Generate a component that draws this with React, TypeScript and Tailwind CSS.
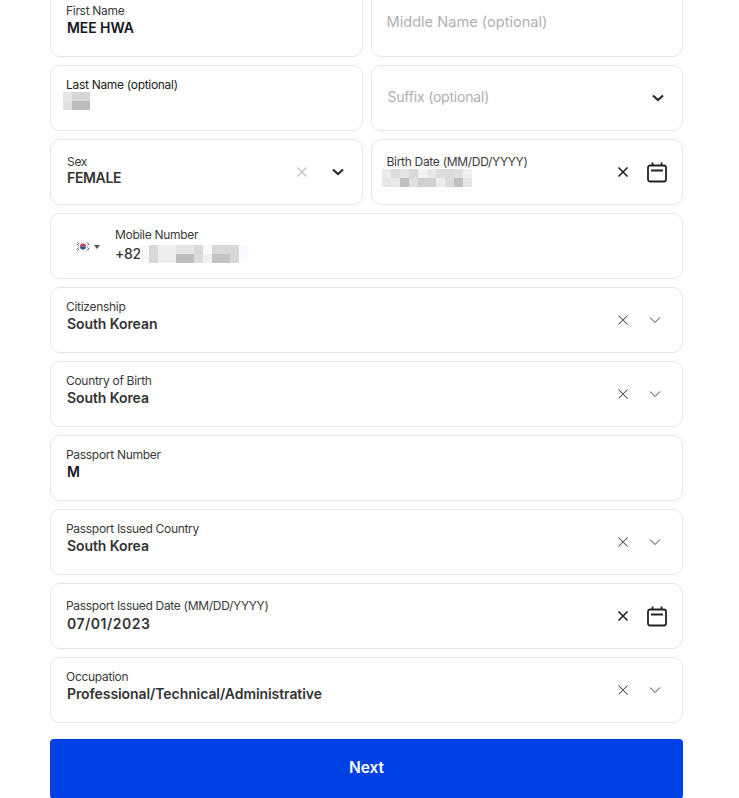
import React from "react";

const XIcon = ({ color = "#444", w = 1.05 }: { color?: string; w?: number }) => (
  <svg width="12" height="12" viewBox="0 0 12 12" fill="none" stroke={color} strokeWidth={w}>
    <path d="M1.5 1.5 10.5 10.5M10.5 1.5 1.5 10.5" />
  </svg>
);
const ThinChevron = () => (
  <svg width="12" height="8" viewBox="0 0 12 8" fill="none" stroke="#444" strokeWidth="1">
    <path d="M1 1.5 6 6.5 11 1.5" />
  </svg>
);
const BoldChevron = () => (
  <svg width="12" height="8" viewBox="0 0 12 8" fill="none" stroke="#2b2b2b" strokeWidth="2.2">
    <path d="M1 1.5 6 6 11 1.5" />
  </svg>
);
const Calendar = () => (
  <svg width="20" height="21" viewBox="0 0 20 21" fill="none" stroke="#222" strokeWidth="1.8">
    <rect x="1" y="3.5" width="18" height="16" rx="2" />
    <path d="M5.5 0.5V3.5M14.5 0.5V3.5M4 8.5H16" />
  </svg>
);
const Flag = () => (
  <svg width="14" height="11" viewBox="0 0 14 11">
    <rect width="14" height="11" fill="#f3f3f3" />
    <path d="M4 5.5a3 3 0 0 1 6 0z" fill="#d8374c" />
    <path d="M4 5.5a3 3 0 0 0 6 0z" fill="#2d4f9e" />
    <path d="M1.5 1.5 3 3M1 3 2.5 4.5M11 1.5 12.5 3M11.5 4.5 13 3M1.5 9.5 3 8M1 8 2.5 6.5M11 9.5 12.5 8M11.5 6.5 13 8" stroke="#444" strokeWidth="0.8" />
  </svg>
);
const Mosaic = ({ rows, cell = 9 }: { rows: string[][]; cell?: number }) => (
  <svg width={rows[0].length * cell} height={rows.length * cell} shapeRendering="crispEdges" className="block">
    {rows.map((r, y) =>
      r.map((c, x) => <rect key={x + "-" + y} x={x * cell} y={y * cell} width={cell} height={cell} fill={c} />)
    )}
  </svg>
);

const Label = ({ children, cls = "" }: { children: React.ReactNode; cls?: string }) => (
  <div className={"text-[12px] leading-[14px] tracking-[-0.3px] text-[#3a3a3a] " + cls}>{children}</div>
);
const Value = ({ children, cls = "" }: { children: React.ReactNode; cls?: string }) => (
  <div className={"text-[14px] leading-[18px] font-semibold tracking-[-0.08px] text-[#333] " + cls}>{children}</div>
);
const Card = ({ children, cls = "" }: { children: React.ReactNode; cls?: string }) => (
  <div className={"h-[66px] rounded-[10px] border border-[#e6e6e6] bg-white flex items-center " + cls}>{children}</div>
);
const Select = ({ label, value }: { label: string; value: string }) => (
  <Card cls="pl-[15px] pr-[21px]">
    <div className="flex-1 pb-[8px]">
      <Label>{label}</Label>
      <Value cls="mt-[1px] pl-[1px]">{value}</Value>
    </div>
    <div className="mr-[20px] flex"><XIcon /></div>
    <ThinChevron />
  </Card>
);

const ln = [
  ["#e4e4e4", "#d6d6d6", "#d6d6d6"],
  ["#e0e0e0", "#bcbcbc", "#bcbcbc"],
];
const bd = [
  ["#ececec", "#dcdcdc", "#e6e6e6", "#d8d8d8", "#f2f2f2", "#e8e8e8", "#dcdcdc", "#dcdcdc", "#dedede", "#f0f0f0"],
  ["#e6e6e6", "#e8e8e8", "#c0c0c0", "#e0e0e0", "#cfcfcf", "#d0d0d0", "#ededed", "#dcdcdc", "#c0c0c0", "#e6e6e6"],
];
const ph = [
  ["#f8f8f8", "#d8d8d8", "#eeeeee", "#eeeeee", "#e4e4e4", "#e4e4e4", "#d8d8d8", "#fafafa", "#d8d8d8", "#d8d8d8", "#d8d8d8", "#f8faff"],
  ["#f8f8f8", "#d8d8d8", "#eeeeee", "#eeeeee", "#bebebe", "#bebebe", "#dcdcdc", "#f0f0f0", "#c4c4c4", "#c4c4c4", "#d8d8d8", "#f8faff"],
];

export default function App() {
  return (
    <div className="h-[798px] overflow-hidden bg-white font-['Inter',sans-serif]">
      <div className="mt-[-9px] ml-[50px] w-[633px] flex flex-col gap-[8px]">
        <div className="grid grid-cols-2 gap-[8px]">
          <Card cls="pl-[15px]">
            <div className="pb-[8px]">
              <Label>First Name</Label>
              <Value cls="mt-[1px] pl-[1px] tracking-[-0.5px] text-[#14141e]">MEE HWA</Value>
            </div>
          </Card>
          <Card cls="pl-[15px]">
            <div className="pb-[5px] text-[14.6px] leading-[20px] text-[#b0b0b0]">Middle Name (optional)</div>
          </Card>
        </div>
        <div className="grid grid-cols-2 gap-[8px]">
          <Card cls="pl-[12px]">
            <div className="pb-[8px]">
              <Label cls="pl-[3px] text-[#222]">Last Name (optional)</Label>
              <Mosaic rows={ln} />
            </div>
          </Card>
          <Card cls="pl-[16px] pr-[18px] justify-between">
            <div className="pb-[3px] text-[14px] tracking-[-0.2px] text-[#b0b0b0]">Suffix (optional)</div>
            <BoldChevron />
          </Card>
        </div>
        <div className="grid grid-cols-2 gap-[8px]">
          <Card cls="pl-[16px] pr-[18px]">
            <div className="flex-1 pb-[2px]">
              <Label>Sex</Label>
              <Value cls="text-[13.5px] tracking-[-0.35px] text-[#2a2a35]">FEMALE</Value>
            </div>
            <div className="mr-[24px] flex"><XIcon color="#c9c9c9" w={1.6} /></div>
            <BoldChevron />
          </Card>
          <Card cls="pl-[10px] pr-[15px]">
            <div className="flex-1 pb-[2px]">
              <Label cls="pl-[5px] text-[#2a2a2a]">Birth Date (MM/DD/YYYY)</Label>
              <Mosaic rows={bd} />
            </div>
            <div className="mr-[18px] flex"><XIcon color="#222" w={1.6} /></div>
            <Calendar />
          </Card>
        </div>
        <Card cls="pl-[25px]">
          <div className="flex items-center w-[39px] pt-[1px]">
            <Flag />
            <div className="ml-[4px] w-0 h-0 border-x-[3px] border-x-transparent border-t-[4px] border-t-[#555]" />
          </div>
          <div className="pb-[1px]">
            <Label>Mobile Number</Label>
            <div className="flex items-center h-[20px] mt-[2px]">
              <div className="w-[25px] text-[14px] font-medium tracking-[-0.3px] text-[#333]">+82</div>
              <Mosaic rows={ph} />
            </div>
          </div>
        </Card>
        <Select label="Citizenship" value="South Korean" />
        <Select label="Country of Birth" value="South Korea" />
        <Card cls="pl-[15px]">
          <div className="pb-[8px]">
            <Label>Passport Number</Label>
            <Value cls="mt-[1px] pl-[1px] text-[#14141e]">M</Value>
          </div>
        </Card>
        <Select label="Passport Issued Country" value="South Korea" />
        <Card cls="pl-[15px] pr-[15px]">
          <div className="flex-1">
            <Label>Passport Issued Date (MM/DD/YYYY)</Label>
            <Value cls="mt-[2px] pl-[1px] tracking-[0.5px]">07/01/2023</Value>
          </div>
          <div className="mr-[18px] flex"><XIcon color="#222" w={1.6} /></div>
          <Calendar />
        </Card>
        <Select label="Occupation" value="Professional/Technical/Administrative" />
        <button className="mt-[8px] h-[60px] shrink-0 rounded-[4px] bg-[#0041e6] pb-[2px] text-white text-[15.5px] font-semibold">
          Next
        </button>
      </div>
    </div>
  );
}
